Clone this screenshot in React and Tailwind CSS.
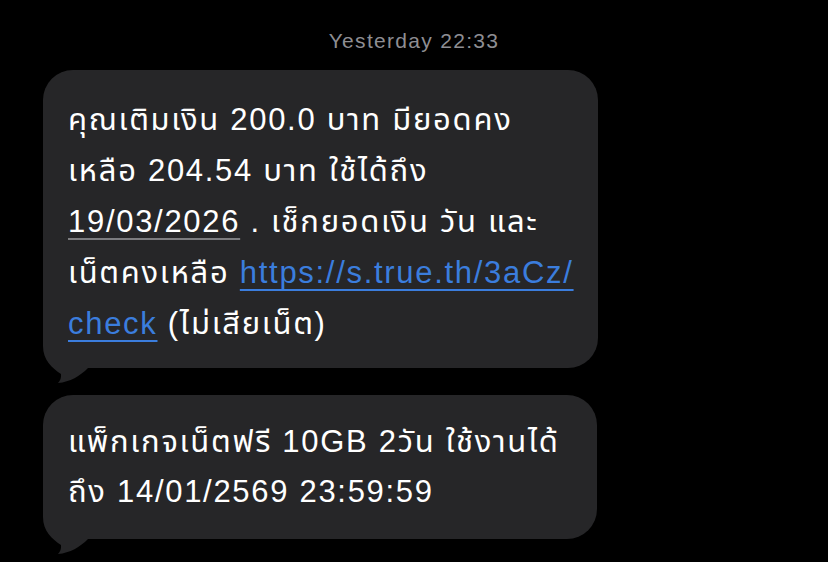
const Tail = () => (
  <svg
    className="absolute left-0 bottom-[-16px]"
    width="46"
    height="46"
    viewBox="0 0 46 46"
  >
    <path
      d="M0,0 L0,8 C0,22 9,30 18,36 C18.5,40 17,43 15,45 C27,44 37,38 45,30 L45,0 Z"
      fill="#262628"
    />
  </svg>
);

const Bubble = ({ className, children }) => (
  <div className={`relative bg-[#262628] rounded-[30px] ${className}`}>
    <Tail />
    <div className="relative">{children}</div>
  </div>
);

const App = () => {
  return (
    <div
      className="w-[828px] h-[562px] bg-black overflow-hidden text-white"
      style={{ fontFamily: '"Liberation Sans", "Noto Sans Thai", "Noto Sans", sans-serif' }}
    >
      <div className="pt-[29px] text-center text-[21px] leading-[24px] tracking-[1.3px] text-[#8e8e93]">
        Yesterday 22:33
      </div>

      <div className="pl-[43px] pt-[17px] flex flex-col gap-[27px]">
        {/* ข้อความเติมเงิน */}
        <Bubble className="w-[555px] h-[298px] pl-[25px] pt-[24px] text-[31px] leading-[51px] tracking-[1.7px]">
          <div>คุณเติมเงิน 200.0 บาท มียอดคง</div>
          <div>เหลือ 204.54 บาท ใช้ได้ถึง</div>
          <div>
            <span className="underline decoration-[#7d7d80] decoration-2 underline-offset-[6px]">19/03/2026</span>
            {' '}. เช็กยอดเงิน วัน และ
          </div>
          <div>
            เน็ตคงเหลือ{' '}
            <span className="text-[#3b7ddd] underline decoration-2 underline-offset-[6px]">https://s.true.th/3aCz/</span>
          </div>
          <div>
            <span className="text-[#3b7ddd] underline decoration-2 underline-offset-[6px]">check</span>
            {' '}(ไม่เสียเน็ต)
          </div>
        </Bubble>

        {/* แพ็กเกจ */}
        <Bubble className="w-[554px] h-[144px] pl-[25px] pt-[22px] text-[31px] leading-[50px] tracking-[1.7px]">
          <div>แพ็กเกจเน็ตฟรี 10GB 2วัน ใช้งานได้</div>
          <div>ถึง 14/01/2569 23:59:59</div>
        </Bubble>
      </div>
    </div>
  );
};

export default App;
